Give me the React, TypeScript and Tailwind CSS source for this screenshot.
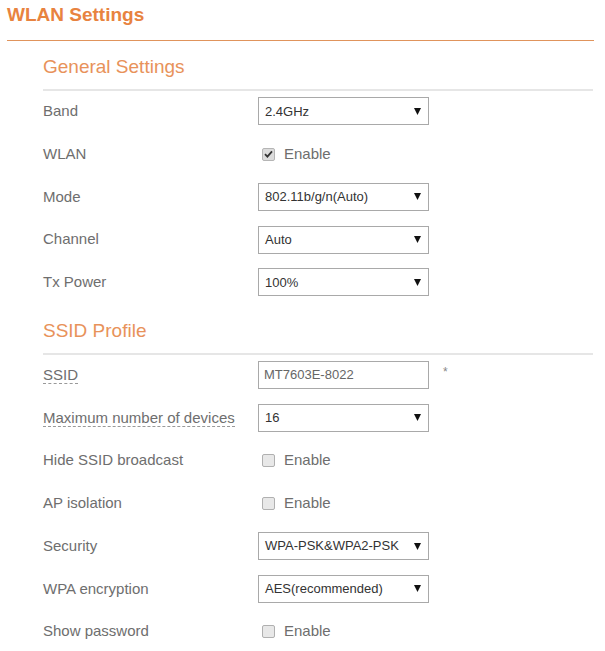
import React from 'react';

type Row =
  | { label: string; kind: 'select'; value: string; hint?: boolean }
  | { label: string; kind: 'check'; checked: boolean }
  | { label: string; kind: 'input'; value: string; hint?: boolean };

const general: Row[] = [
  { label: 'Band', kind: 'select', value: '2.4GHz' },
  { label: 'WLAN', kind: 'check', checked: true },
  { label: 'Mode', kind: 'select', value: '802.11b/g/n(Auto)' },
  { label: 'Channel', kind: 'select', value: 'Auto' },
  { label: 'Tx Power', kind: 'select', value: '100%' },
];

const ssid: Row[] = [
  { label: 'SSID', kind: 'input', value: 'MT7603E-8022', hint: true },
  { label: 'Maximum number of devices', kind: 'select', value: '16', hint: true },
  { label: 'Hide SSID broadcast', kind: 'check', checked: false },
  { label: 'AP isolation', kind: 'check', checked: false },
  { label: 'Security', kind: 'select', value: 'WPA-PSK&WPA2-PSK' },
  { label: 'WPA encryption', kind: 'select', value: 'AES(recommended)' },
  { label: 'Show password', kind: 'check', checked: false },
];

function Arrow() {
  return (
    <svg width="7" height="7" viewBox="0 0 7 7" className="shrink-0">
      <path d="M0 0 H7 L3.5 7 Z" fill="#111" />
    </svg>
  );
}

function Checkbox({ checked }: { checked: boolean }) {
  return (
    <span
      className={`flex h-[13px] w-[13px] items-center justify-center rounded-[2px] border ${
        checked ? 'border-[#b5b5b5] bg-[#dcdcdc]' : 'border-[#b0b0b0] bg-[#e8e8e8]'
      }`}
    >
      {checked && (
        <svg width="9" height="8" viewBox="0 0 9 8">
          <path d="M1 4.2 L3.4 6.6 L8 1.4" stroke="#333" strokeWidth="1.8" fill="none" />
        </svg>
      )}
    </span>
  );
}

function Field({ row }: { row: Row }) {
  if (row.kind === 'select') {
    return (
      <div className="flex h-[28px] w-[171px] items-center justify-between border border-[#a9a9a9] bg-white pl-[6px] pr-[7px] text-[13px] text-[#333]">
        <span>{row.value}</span>
        <Arrow />
      </div>
    );
  }
  if (row.kind === 'input') {
    return (
      <div className="flex items-center">
        <div className="flex h-[28px] w-[171px] items-center border border-[#a9a9a9] bg-white pl-[5px] text-[13px] text-[#666]">
          {row.value}
        </div>
        <span className="ml-[14px] -mt-[6px] text-[12px] text-[#888]">*</span>
      </div>
    );
  }
  return (
    <div className="flex items-center pl-[4px]">
      <Checkbox checked={row.checked} />
      <span className="ml-[9px] text-[15px] text-[#6e6e6e]">Enable</span>
    </div>
  );
}

function Section({ title, rows }: { title: string; rows: Row[] }) {
  return (
    <div className="ml-[43px] mr-[12px]">
      <h2 className="border-b-2 border-[#e6e6e6] pb-[10px] text-[19px] leading-[24px] text-[#e8925a]">
        {title}
      </h2>
      <div className="-mt-[1px]">
        {rows.map((row) => (
          <div key={row.label} className="flex h-[42.75px] items-center">
            <div className="w-[215px] text-[15px] text-[#6e6e6e]">
              {'hint' in row && row.hint ? (
                <span className="border-b border-dashed border-[#999]">{row.label}</span>
              ) : (
                row.label
              )}
            </div>
            <Field row={row} />
          </div>
        ))}
      </div>
    </div>
  );
}

export default function App() {
  return (
    <div className="h-[651px] w-[605px] overflow-hidden bg-white font-['Liberation_Sans',Arial,sans-serif]">
      <h1 className="mx-[7px] mr-[11px] border-b border-[#e0945c] pt-[3px] pb-[13px] text-[19px] font-bold leading-[24px] text-[#e8833f]">
        WLAN Settings
      </h1>
      <div className="pt-[14px]">
        <Section title="General Settings" rows={general} />
      </div>
      <div className="pt-[15px]">
        <Section title="SSID Profile" rows={ssid} />
      </div>
    </div>
  );
}
